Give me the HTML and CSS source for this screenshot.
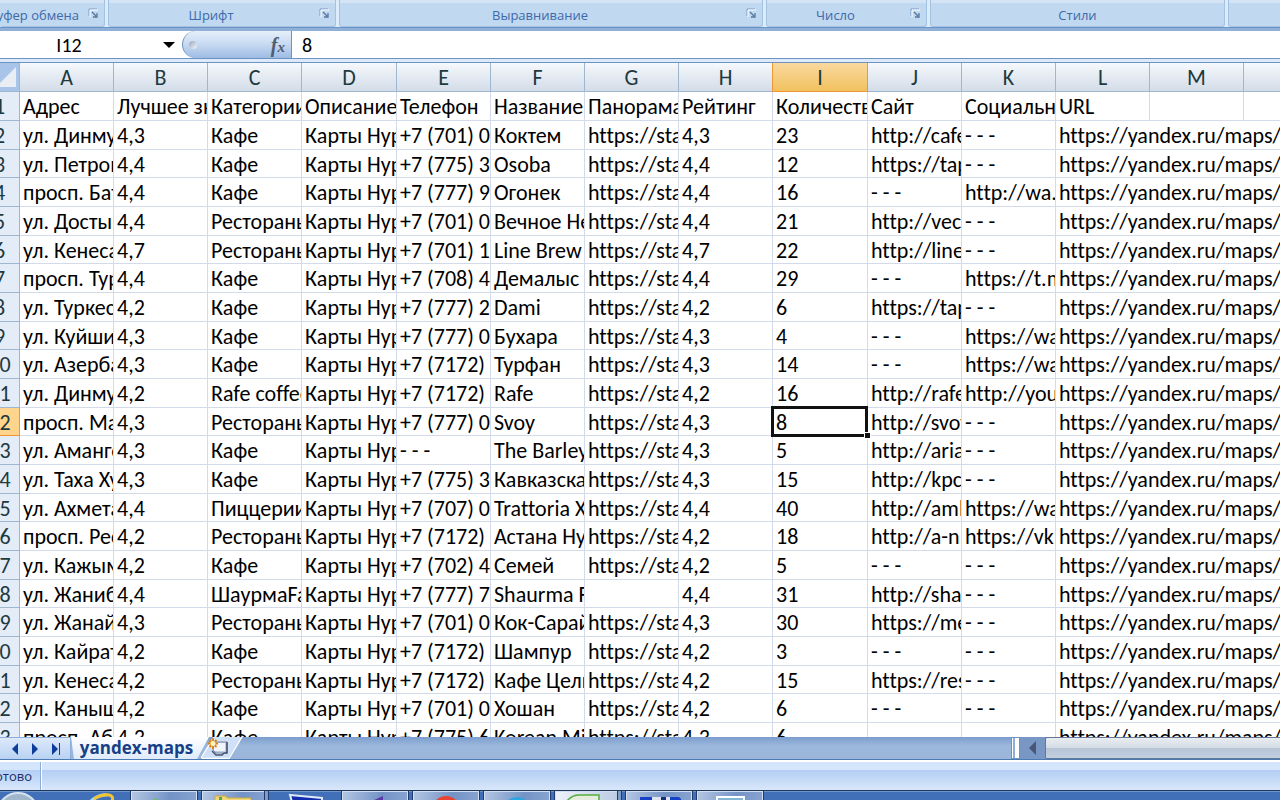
FILE: index.html
```html
<!DOCTYPE html>
<html lang="ru">
<head>
<meta charset="utf-8">
<title>yandex-maps</title>
<link rel="stylesheet" href="styles.css">
</head>
<body>
<svg width="0" height="0" class="defs" aria-hidden="true">
  <symbol id="launcher" viewBox="0 0 10 10"><path d="M1 8V1h8" fill="none" stroke="#7b9cc9"/><path d="M2 9V2h8" fill="none" stroke="#fff"/><path d="M4 4l4 4M9 5v4H5" fill="none" stroke="#56789f" stroke-width="1.3"/></symbol>
</svg>
<div class="ribbon">
  <section class="group clipboard"><h2>Буфер обмена</h2><button aria-label="Буфер обмена"><svg><use href="#launcher"/></svg></button></section>
  <section class="group font"><h2>Шрифт</h2><button aria-label="Шрифт"><svg><use href="#launcher"/></svg></button></section>
  <section class="group align"><h2>Выравнивание</h2><button aria-label="Выравнивание"><svg><use href="#launcher"/></svg></button></section>
  <section class="group number"><h2>Число</h2><button aria-label="Число"><svg><use href="#launcher"/></svg></button></section>
  <section class="group style"><h2>Стили</h2></section>
  <section class="group rest"></section>
</div>
<div class="formula">
  <input class="name" aria-label="Имя" value="I12">
  <button class="drop" aria-label="Список имён"><svg width="12" height="6"><path d="M0 0h12L6 6z"/></svg></button>
  <div class="pill"><span class="knob"></span><button class="fx" aria-label="Вставить функцию">f<small>x</small></button></div>
  <input class="value" aria-label="Строка формул" value="8">
</div>
<main class="sheet">
<table>
<colgroup><col class="num"><col><col><col><col class="wide"><col><col><col><col><col class="wide"><col><col><col><col><col></colgroup>
<thead><tr><th class="corner"><svg width="16" height="20"><path d="M16 0v20H-4z" fill="#e9eef5"/></svg></th><th>A</th><th>B</th><th>C</th><th>D</th><th>E</th><th>F</th><th>G</th><th>H</th><th class="on">I</th><th>J</th><th>K</th><th>L</th><th>M</th><th>N</th></tr></thead>
<tbody>
<tr><th>1</th><td>Адрес</td><td>Лучшее значение</td><td>Категории</td><td>Описание</td><td>Телефон</td><td>Название</td><td>Панорама</td><td>Рейтинг</td><td>Количество</td><td>Сайт</td><td>Социальные</td><td>URL</td><td></td><td></td></tr>
<tr><th>2</th><td>ул. Динмухамеда</td><td>4,3</td><td>Кафе</td><td>Карты Нур-Султана</td><td>+7 (701) 066</td><td>Коктем</td><td>https://static</td><td>4,3</td><td>23</td><td>http://cafe-kok</td><td>- - -</td><td colspan="3">https://yandex.ru/maps/org</td></tr>
<tr><th>3</th><td>ул. Петрова</td><td>4,4</td><td>Кафе</td><td>Карты Нур-Султана</td><td>+7 (775) 300</td><td>Osoba</td><td>https://static</td><td>4,4</td><td>12</td><td>https://taplink</td><td>- - -</td><td colspan="3">https://yandex.ru/maps/org</td></tr>
<tr><th>4</th><td>просп. Батыра</td><td>4,4</td><td>Кафе</td><td>Карты Нур-Султана</td><td>+7 (777) 999</td><td>Огонек</td><td>https://static</td><td>4,4</td><td>16</td><td>- - -</td><td>http://wa.me</td><td colspan="3">https://yandex.ru/maps/org</td></tr>
<tr><th>5</th><td>ул. Достык</td><td>4,4</td><td>Рестораны</td><td>Карты Нур-Султана</td><td>+7 (701) 066</td><td>Вечное Небо</td><td>https://static</td><td>4,4</td><td>21</td><td>http://vechnoe</td><td>- - -</td><td colspan="3">https://yandex.ru/maps/org</td></tr>
<tr><th>6</th><td>ул. Кенесары</td><td>4,7</td><td>Рестораны</td><td>Карты Нур-Султана</td><td>+7 (701) 155</td><td>Line Brew</td><td>https://static</td><td>4,7</td><td>22</td><td>http://line-brew</td><td>- - -</td><td colspan="3">https://yandex.ru/maps/org</td></tr>
<tr><th>7</th><td>просп. Туран</td><td>4,4</td><td>Кафе</td><td>Карты Нур-Султана</td><td>+7 (708) 425</td><td>Демалыс</td><td>https://static</td><td>4,4</td><td>29</td><td>- - -</td><td>https://t.me</td><td colspan="3">https://yandex.ru/maps/org</td></tr>
<tr><th>8</th><td>ул. Туркестан</td><td>4,2</td><td>Кафе</td><td>Карты Нур-Султана</td><td>+7 (777) 266</td><td>Dami</td><td>https://static</td><td>4,2</td><td>6</td><td>https://taplink</td><td>- - -</td><td colspan="3">https://yandex.ru/maps/org</td></tr>
<tr><th>9</th><td>ул. Куйши Дина</td><td>4,3</td><td>Кафе</td><td>Карты Нур-Султана</td><td>+7 (777) 055</td><td>Бухара</td><td>https://static</td><td>4,3</td><td>4</td><td>- - -</td><td>https://wa.me</td><td colspan="3">https://yandex.ru/maps/org</td></tr>
<tr><th>10</th><td>ул. Азербаев</td><td>4,3</td><td>Кафе</td><td>Карты Нур-Султана</td><td>+7 (7172) 37</td><td>Турфан</td><td>https://static</td><td>4,3</td><td>14</td><td>- - -</td><td>https://wa.me</td><td colspan="3">https://yandex.ru/maps/org</td></tr>
<tr><th>11</th><td>ул. Динмухамеда</td><td>4,2</td><td>Rafe coffee</td><td>Карты Нур-Султана</td><td>+7 (7172) 66</td><td>Rafe</td><td>https://static</td><td>4,2</td><td>16</td><td>http://rafe.kz</td><td>http://youtube</td><td colspan="3">https://yandex.ru/maps/org</td></tr>
<tr class="on"><th>12</th><td>просп. Мангилик</td><td>4,3</td><td>Рестораны</td><td>Карты Нур-Султана</td><td>+7 (777) 099</td><td>Svoy</td><td>https://static</td><td>4,3</td><td class="active">8</td><td>http://svoy.kz</td><td>- - -</td><td colspan="3">https://yandex.ru/maps/org</td></tr>
<tr><th>13</th><td>ул. Амангельды</td><td>4,3</td><td>Кафе</td><td>Карты Нур-Султана</td><td>- - -</td><td>The Barley</td><td>https://static</td><td>4,3</td><td>5</td><td>http://aria.kz</td><td>- - -</td><td colspan="3">https://yandex.ru/maps/org</td></tr>
<tr><th>14</th><td>ул. Таха Хусейна</td><td>4,3</td><td>Кафе</td><td>Карты Нур-Султана</td><td>+7 (775) 300</td><td>Кавказская</td><td>https://static</td><td>4,3</td><td>15</td><td>http://kpc.kz</td><td>- - -</td><td colspan="3">https://yandex.ru/maps/org</td></tr>
<tr><th>15</th><td>ул. Ахмета</td><td>4,4</td><td>Пиццерии</td><td>Карты Нур-Султана</td><td>+7 (707) 066</td><td>Trattoria X</td><td>https://static</td><td>4,4</td><td>40</td><td>http://amlet.kz</td><td>https://wa.me</td><td colspan="3">https://yandex.ru/maps/org</td></tr>
<tr><th>16</th><td>просп. Республики</td><td>4,2</td><td>Рестораны</td><td>Карты Нур-Султана</td><td>+7 (7172) 44</td><td>Астана Нури</td><td>https://static</td><td>4,2</td><td>18</td><td>http://a-n.kz</td><td>https://vk.com</td><td colspan="3">https://yandex.ru/maps/org</td></tr>
<tr><th>17</th><td>ул. Кажымукана</td><td>4,2</td><td>Кафе</td><td>Карты Нур-Султана</td><td>+7 (702) 411</td><td>Семей</td><td>https://static</td><td>4,2</td><td>5</td><td>- - -</td><td>- - -</td><td colspan="3">https://yandex.ru/maps/org</td></tr>
<tr><th>18</th><td>ул. Жанибека</td><td>4,4</td><td>ШаурмаFast</td><td>Карты Нур-Султана</td><td>+7 (777) 788</td><td>Shaurma Food</td><td></td><td>4,4</td><td>31</td><td>http://shaurma</td><td>- - -</td><td colspan="3">https://yandex.ru/maps/org</td></tr>
<tr><th>19</th><td>ул. Жанайдара</td><td>4,3</td><td>Рестораны</td><td>Карты Нур-Султана</td><td>+7 (701) 022</td><td>Кок-Сарай</td><td>https://static</td><td>4,3</td><td>30</td><td>https://menu</td><td>- - -</td><td colspan="3">https://yandex.ru/maps/org</td></tr>
<tr><th>20</th><td>ул. Кайрата</td><td>4,2</td><td>Кафе</td><td>Карты Нур-Султана</td><td>+7 (7172) 55</td><td>Шампур</td><td>https://static</td><td>4,2</td><td>3</td><td>- - -</td><td>- - -</td><td colspan="3">https://yandex.ru/maps/org</td></tr>
<tr><th>21</th><td>ул. Кенесары</td><td>4,2</td><td>Рестораны</td><td>Карты Нур-Султана</td><td>+7 (7172) 22</td><td>Кафе Целинник</td><td>https://static</td><td>4,2</td><td>15</td><td>https://rest</td><td>- - -</td><td colspan="3">https://yandex.ru/maps/org</td></tr>
<tr><th>22</th><td>ул. Каныша</td><td>4,2</td><td>Кафе</td><td>Карты Нур-Султана</td><td>+7 (701) 077</td><td>Хошан</td><td>https://static</td><td>4,2</td><td>6</td><td>- - -</td><td>- - -</td><td colspan="3">https://yandex.ru/maps/org</td></tr>
<tr><th>23</th><td>просп. Абая</td><td>4,3</td><td>Кафе</td><td>Карты Нур-Султана</td><td>+7 (775) 600</td><td>Korean Mix</td><td>https://static</td><td>4,3</td><td>6</td><td></td><td></td><td colspan="3">https://yandex.ru/maps/org</td></tr>
</tbody>
</table>
</main>
<div class="tabs">
  <div class="nav">
    <button aria-label="Предыдущий лист"><svg width="7" height="12"><path d="M7 0v12L1 6z"/></svg></button>
    <button aria-label="Следующий лист"><svg width="7" height="12"><path d="M0 0v12l6-6z"/></svg></button>
    <button aria-label="Последний лист"><svg width="9" height="12"><path d="M0 0v12l6-6zM7 0h1v12H7z"/></svg></button>
  </div>
  <button class="tab">yandex-maps</button>
  <button class="new" aria-label="Вставить лист"><svg width="42" height="22" viewBox="0 0 42 22"><path d="M0 21.5H27L41 0H13z" fill="#cfe0f7"/><path d="M0 21L13 0M41 0L28 21.5H1" fill="none" stroke="#fff" stroke-width="1.4"/><path d="M12 5h14v11H15l-3-3z" fill="#c3cde2" stroke="#7c89a8"/><path d="M13 6h11v8H13z" fill="#f1f4fb"/><path d="M11 14l4 4h6l2-2M26 5v11h-3" fill="none" stroke="#46536f" stroke-width="1.5"/><path d="M12 1v11M7 6.500h10M8.500 3l7 7M15.500 3l-7 7" stroke="#d98316" stroke-width="1.800"/><circle cx="12" cy="6.500" r="2.500" fill="#fff5b8"/></svg></button>
  <div class="scroll">
    <span class="split"></span>
    <button class="left" aria-label="Прокрутка влево"><svg width="8" height="14"><path d="M7 0v14L0 7z" fill="#4b5577"/></svg></button>
    <span class="thumb"></span>
  </div>
</div>
<footer class="status"><span>Готово</span></footer>
<nav class="taskbar">
  <button class="plain" aria-label="Пуск"><svg width="60" height="10"><ellipse cx="17" cy="19" rx="19" ry="17" fill="#9fb6cb" stroke="#d5e2ee" stroke-width="2"/></svg></button>
  <button class="plain" aria-label="Internet Explorer"><svg width="60" height="10"><path d="M25 10q8-7 16-6" fill="none" stroke="#9adcf6" stroke-width="3"/><path d="M28 8Q36 3 43 4q5 1 3 6" fill="none" stroke="#f4c430" stroke-width="3"/></svg></button>
  <button class="app" aria-label="Приложение"><svg width="60" height="10"><path d="M16 10l6-3 4 3z" fill="#6fbf73"/></svg></button>
  <button class="app stack" aria-label="Проводник"><svg width="60" height="10"><path d="M10 10V5h10l3 2h23v3z" fill="#f0d77b" stroke="#cda83e"/><path d="M14 6h3v4h-3z" fill="#56a64b"/></svg></button>
  <button class="plain mid" aria-label="Монитор"><svg width="60" height="10"><path d="M15 4l32 3v4H17z" fill="#102cae" stroke="#dfe9f6" stroke-width="2"/></svg></button>
  <button class="app" aria-label="Visual Studio"><svg width="60" height="10"><path d="M27 10l11-5v5z" fill="#5a3ba5"/></svg></button>
  <button class="app" aria-label="Chrome"><svg width="60" height="10"><circle cx="30" cy="19" r="14" fill="#e94335"/></svg></button>
  <button class="app" aria-label="Telegram"><svg width="60" height="10"><circle cx="30" cy="20" r="14" fill="#2ca5e0"/></svg></button>
  <button class="app light stack" aria-label="Excel"><svg width="60" height="10"><path d="M9 10q5-6 12-6h20v6" fill="#e4eddd" stroke="#55ad3d" stroke-width="1.500"/></svg></button>
  <button class="app" aria-label="Сохранение"><svg width="60" height="10"><path d="M11 10V6h39l2 2v2z" fill="#1641c8"/><path d="M23 6h18v4H23z" fill="#dfe4ee"/><path d="M32 6h5v4h-5z" fill="#1a2f7a"/></svg></button>
  <button class="app" aria-label="Изображения"><svg width="60" height="10"><path d="M17 11V6h27v5" fill="#86b6d6" stroke="#fff" stroke-width="2"/></svg></button>
</nav>
</body>
</html>
```
FILE: styles.css
```css
* { box-sizing: border-box; }
html, body { height: 100%; }
body {
  margin: 0;
  display: flex;
  flex-direction: column;
  overflow: hidden;
  background: #dceafb;
  font-family: "Open Sans", "Noto Sans", sans-serif;
  font-size: 13px;
}
button, input { margin: 0; padding: 0; border: 0; background: none; font: inherit; color: inherit; }
button { display: flex; align-items: center; justify-content: center; }
.defs { position: absolute; }

.ribbon {
  flex: none;
  display: flex;
  gap: 3px;
  height: 31px;
  padding-bottom: 4px;
  background: #dcecfa;
  border-bottom: 3px solid #8fb0d9;
  box-shadow: inset 0 -1px #6d94c4;
}
.group {
  flex: none;
  display: flex;
  align-items: center;
  height: 27px;
  padding: 3px 6px 0 0;
  border: 1px solid #a3c2e2;
  border-top: 0;
  border-radius: 0 0 3px 3px;
  background: linear-gradient(#d4e4f4 3px, #c0d8f0 3px);
}
.group h2 { flex: 1; min-width: 0; margin: 0; padding-right: 6px; font-size: 13px; font-weight: 400; line-height: 20px; text-align: center; white-space: nowrap; color: #3e6aaa; }
.group svg { display: block; width: 10px; height: 10px; }
.group button { margin-bottom: 4px; }
.clipboard { width: 105px; border-left: 0; }
.clipboard h2 { display: flex; justify-content: flex-end; padding-right: 9px; }
.font { width: 228px; }
.align { width: 424px; }
.number { width: 161px; }
.style { width: 295px; padding-right: 0; }
.style h2 { padding-right: 0; }
.group.rest { flex: 1; border-right: 0; border-radius: 0 0 0 3px; }

.formula {
  flex: none;
  display: flex;
  height: 28px;
  background: #fff;
  border-bottom: 1px solid #6d94bf;
  font: 20px/27px Carlito, Lato, sans-serif;
}
.name { width: 138px; padding-top: 2px; text-align: center; }
.drop { width: 44px; padding-left: 18px; }
.pill {
  display: flex;
  align-items: center;
  justify-content: space-between;
  width: 110px;
  padding: 0 6px;
  border: solid #6d94bf;
  border-width: 0 1px 0 1px;
  border-radius: 14px 0 0 14px;
  background: linear-gradient(#e6effa, #c7d9f1 50%, #9dbce4);
}
.knob { width: 8px; height: 8px; border-radius: 50%; background: linear-gradient(135deg, #98a6ba, #f4f8fd); }
.fx { font: italic bold 20px/24px "Liberation Serif", serif; color: #4f5d72; }
.fx small { font-size: 15px; align-self: flex-end; line-height: 20px; }
.value { flex: 1; min-width: 0; padding: 2px 0 0 10px; }

.sheet {
  flex: 1;
  min-height: 0;
  overflow: hidden;
  margin-top: 3px;
  border-top: 1px solid #6d94bf;
  background: #fff;
  font: 22px/26px Carlito, Lato, sans-serif;
  font-variant-ligatures: none;
}
table { width: 1358px; margin-left: -20px; table-layout: fixed; border-collapse: separate; border-spacing: 0; }
col { width: 94px; }
col.num { width: 40px; }
col.wide { width: 95px; }
td, th { padding: 2px 0 0; font-weight: 400; overflow: hidden; white-space: nowrap; }
td { padding-left: 3px; border-right: 1px solid #d3daea; border-bottom: 1px solid #d3daea; }
th { color: #1d3a3f; text-align: center; border-right: 1px solid #9eb6ce; border-bottom: 1px solid #9eb6ce; }
thead tr { height: 28px; }
thead th { background: linear-gradient(#f6f9fc, #e4eaf2 50%, #d3dce8); }
thead th.on { background: linear-gradient(#f9d99f, #f1c15f); border-color: #f29536; box-shadow: -1px 0 #f29536; }
.corner { padding: 0 3px 0 0; }
thead .corner { background: #a9c4e9; }
.corner svg { display: block; margin-left: auto; }
tbody tr { height: 29px; }
tbody tr:nth-child(3n) { height: 28px; line-height: 25px; }
tbody th { background: #e4ecf7; }
tbody .on th { background: #ffd58d; border-color: #f29536; }
.active { position: relative; overflow: visible; }
.active::before { content: ""; position: absolute; inset: -2px -1px -2px -2px; border: 3px solid #111; }
.active::after { content: ""; position: absolute; right: -3px; bottom: -3px; width: 5px; height: 5px; background: #111; box-shadow: 0 0 0 1px #fff; }

.tabs {
  flex: none;
  display: flex;
  height: 23px;
  border-bottom: 1px solid #4c7ab5;
  background: linear-gradient(#7b9dce, #9db8dc 9px, #9bb5da);
}
.nav {
  display: flex;
  align-items: center;
  justify-content: space-between;
  width: 71px;
  padding: 0 9px 0 11px;
  border: solid #8eaeda;
  border-width: 1px 1px 0 0;
  background: linear-gradient(#dce9fa, #b9d2f3);
}
.nav svg { display: block; fill: #0c3e99; }
.tab {
  width: 138px;
  margin-right: -8px;
  padding-right: 7px;
  background: linear-gradient(#fff, #dfeafa);
  clip-path: polygon(0 0, 100% 0, calc(100% - 12px) 100%, 3px 100%);
  font: bold 17px/22px "Open Sans", "Noto Sans", sans-serif;
  color: #163f86;
}
.new { width: 42px; }
.new svg { display: block; }
.scroll { display: flex; width: 269px; margin-left: auto; }
.split { width: 9px; border: 1px solid #6d94bf; background: linear-gradient(90deg, #fff 1px, #8eaeda 1px, #8eaeda 3px, #fff 3px); }
.left { width: 25px; background: #7897c4; }
.thumb { flex: 1; border: 1px solid #647896; border-right: 0; border-radius: 2px 0 0 2px; background: linear-gradient(#e9edf2, #d5dce5 50%, #b5c3d5 50%, #c4d0df); }

.status {
  flex: none;
  display: flex;
  height: 30px;
  border-top: 2px solid #fff;
  background: linear-gradient(#d5e5fb 8px, #b2cef4 8px, #d9e7fa);
}
.status span {
  display: flex;
  justify-content: flex-end;
  width: 41px;
  padding-right: 8px;
  border-right: 1px solid #8eaeda;
  box-shadow: 1px 0 #fff;
  line-height: 28px;
  color: #1b2f68;
}

.taskbar {
  flex: none;
  display: flex;
  gap: 3px;
  height: 10px;
  overflow: hidden;
  border-top: 1px solid #1f3558;
  background: linear-gradient(#6f97cf 1px, #4270b8 1px);
}
.taskbar svg { display: block; }
.taskbar button { flex: none; width: 68px; align-items: flex-start; overflow: hidden; }
.taskbar .plain { width: 62px; }
.taskbar .mid { width: 66px; }
.taskbar .app { border: 1px solid #1f3a6b; border-width: 0 1px; background: linear-gradient(100deg, #b5c7e3, #7393c6 60%, #88a4d0); box-shadow: inset 1px 1px #d4e0f1, inset -1px 0 #d4e0f1; }
.taskbar .light { background: linear-gradient(100deg, #eef3fa, #b8c9e2); }
.taskbar .stack { box-shadow: inset -3px 0 #7e9cc9, inset -4px 0 #1f3a6b, inset 1px 1px #d4e0f1; }
```
